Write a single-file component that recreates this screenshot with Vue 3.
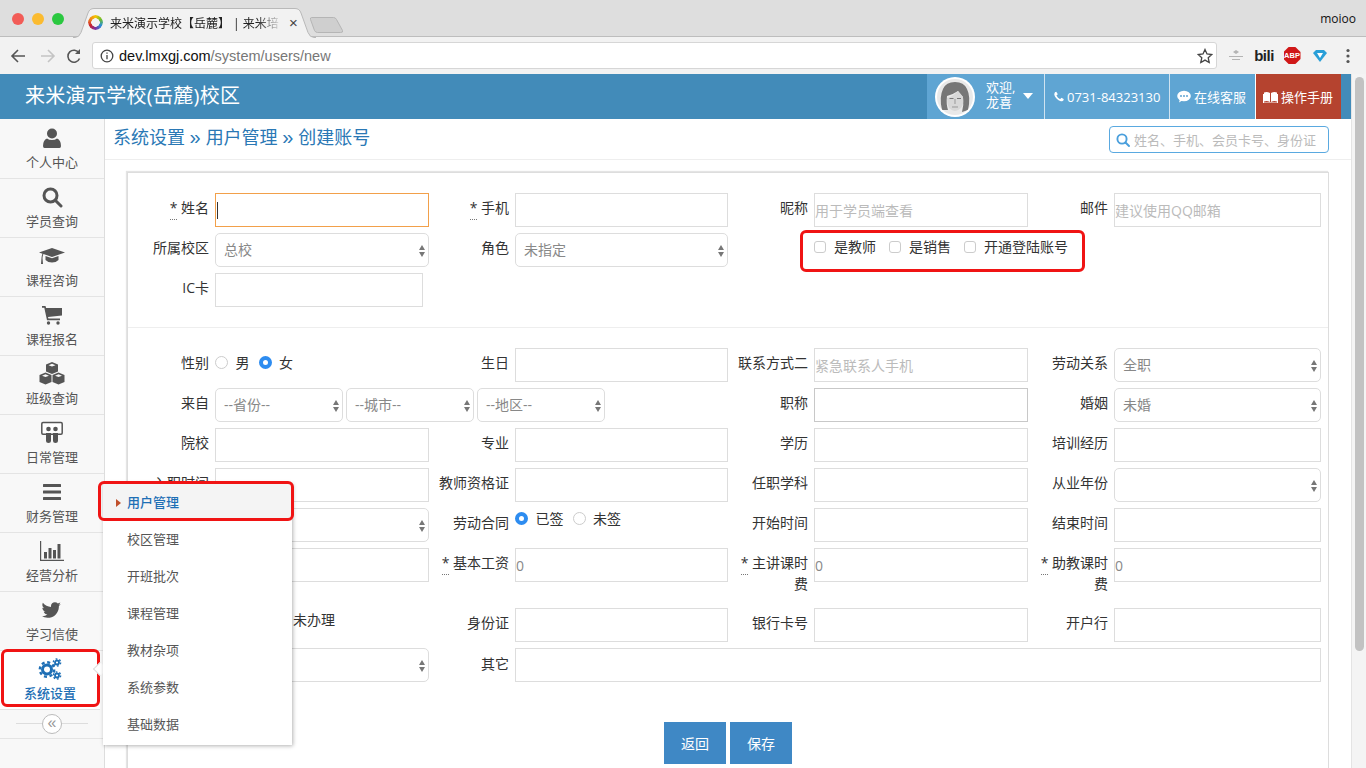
<script setup>
const twitter = 'M1620 408q-67 98-162 167 1 14 1 42 0 130-38 259.5t-115.5 248.5-184.5 210.5-258 146-323 54.5q-271 0-496-145 35 4 78 4 225 0 401-138-105-2-188-64.5t-114-159.5q33 5 61 5 43 0 85-11-112-23-185.5-111.5t-73.5-205.5v-4q68 38 146 41-66-44-105-115t-39-154q0-88 44-163 121 149 294.5 238.5t371.5 99.5q-8-38-8-74 0-134 94.5-228.5t228.5-94.5q140 0 236 102 109-21 205-78-37 115-142 178 97-10 189-50z'
const phone = 'M1600 1240q0 27-10 70.5t-21 68.5q-21 50-122 106-94 51-186 51-27 0-53-3.5t-57.5-12.5-47-14.5-55.5-20.5-49-18q-98-35-175-83-127-79-264-216t-216-264q-48-77-83-175-3-9-18-49t-20.5-55.5-14.5-47-12.5-57.5-3.5-53q0-92 51-186 56-101 106-122 25-11 68.5-21t70.5-10q14 0 21 3 18 6 53 76 11 19 30 54t35 63.5 31 53.5q3 4 17.5 25t21.5 35.5 7 28.5q0 20-28.5 50t-62 55-62 53-28.5 46q0 9 5 22.5t8.5 20.5 14 24 11.5 19q76 137 174 235t235 174q2 1 19 11.5t24 14 20.5 8.5 22.5 5q18 0 46-28.5t53-62 55-62 50-28.5q14 0 28.5 7t35.5 21.5 25 17.5q25 15 53.5 31t63.5 35 54 30q70 35 76 53 3 7 3 21z'
const navItems = [
  { key: 'user', label: '个人中心' },
  { key: 'search', label: '学员查询' },
  { key: 'cap', label: '课程咨询' },
  { key: 'cart', label: '课程报名' },
  { key: 'cubes', label: '班级查询' },
  { key: 'slide', label: '日常管理' },
  { key: 'bars', label: '财务管理' },
  { key: 'chart', label: '经营分析' },
  { key: 'twitter', label: '学习信使' },
  { key: 'cogs', label: '系统设置', active: true }
]
const menu = ['用户管理', '校区管理', '开班批次', '课程管理', '教材杂项', '系统参数', '基础数据']
</script>

<template>
  <div class="page">
    <div class="tabbar">
      <div class="lights"><i class="l-red"></i><i class="l-yellow"></i><i class="l-green"></i></div>
      <div class="tab">
        <svg class="tab-bg" width="243" height="30" viewBox="0 0 243 30"><path d="M0 29.500h2q4 0 6-5L15 5q1.500-4.500 6-4.500h201q4.500 0 6 4.500l7 19.500q2 5 6 5h2" fill="#f2f2f2" stroke="#b9b9b9"/></svg>
        <span class="favicon"></span>
        <span class="tab-title">来米演示学校【岳麓】 | 来米培</span>
        <span class="tab-x">×</span>
      </div>
      <svg class="newtab" width="34" height="18" viewBox="0 0 34 18"><path d="M1.500 1.500h22q2 0 3 2l6 11q1 2-2 2h-23q-2 0-3-2l-4-11q-.5-2 1-2z" fill="#cfcfcf" stroke="#b5b5b5"/></svg>
      <span class="profile">moioo</span>
    </div>
    <div class="toolbar">
      <svg class="tool" width="18" height="18" viewBox="0 0 18 18" fill="none" stroke="#555" stroke-width="1.600"><path d="M16 9H3M9 3L3 9l6 6"/></svg>
      <svg class="tool dim" width="18" height="18" viewBox="0 0 18 18" fill="none" stroke="#c4c4c4" stroke-width="1.600"><path d="M2 9h13M9 3l6 6-6 6"/></svg>
      <svg class="tool last" width="18" height="18" viewBox="0 0 18 18" fill="none" stroke="#555" stroke-width="1.600"><path d="M14.500 11.500a6 6 0 1 1-.5-5.500"/><path d="M15 2v5h-5" fill="#555" stroke="none"/></svg>
      <div class="omni">
        <svg width="14" height="14" viewBox="0 0 14 14" fill="none" stroke="#444" stroke-width="1.300"><circle cx="7" cy="7" r="5.800"/><path d="M7 6v4.200M7 3.500v1.300"/></svg>
        <span class="url"><b>dev.lmxgj.com</b>/system/users/new</span>
        <svg class="star" width="16" height="16" viewBox="0 0 16 16" fill="none" stroke="#444" stroke-width="1.300"><path d="M8 1.500l2 4.500 4.800.5-3.600 3.200 1 4.800L8 12.100l-4.200 2.400 1-4.800L1.200 6.500 6 6z"/></svg>
      </div>
      <div class="exts">
        <svg width="18" height="16" viewBox="0 0 18 16"><path d="M9 2l3 2-3 2-3-2zM2 8h14v1H2zM5 11h8v1H5z" fill="#b4b4b4"/></svg>
        <span class="bili">bili</span>
        <span class="abp">ABP</span>
        <svg width="16" height="16" viewBox="0 0 16 16"><path d="M1 5l3-3h8l3 3-7 9z" fill="#2a9fd8"/><path d="M5 5h6l-3 5z" fill="#fff"/></svg>
        <svg width="4" height="16" viewBox="0 0 4 16" fill="#555"><circle cx="2" cy="2.500" r="1.600"/><circle cx="2" cy="8" r="1.600"/><circle cx="2" cy="13.500" r="1.600"/></svg>
      </div>
    </div>

    <div class="viewport">
      <div class="app">
        <header class="app-header">
          <div class="brand">来米演示学校(岳麓)校区</div>
          <div class="head-user">
            <svg class="avatar" width="40" height="40" viewBox="0 0 40 40">
              <circle cx="20" cy="20" r="20" fill="#fff"/>
              <clipPath id="face-clip"><circle cx="20" cy="20" r="18"/></clipPath>
              <g clip-path="url(#face-clip)">
                <rect width="40" height="40" fill="#e9e9e9"/>
                <path d="M7 33Q4 20 8 12 11 5 20 5t12 7q4 8 1 21l-6 2q2-7 1-15-3-3-5-6-6 4-11 5-1 8 1 14z" fill="#777"/>
                <path d="M12 21q5-1 11-7 3 3 5 6 1 8-2 11-3 3-6 3t-6-3q-2-4-2-10z" fill="#d8d8d8"/>
                <path d="M14.500 21.500h4M22 21.500h4" stroke="#777" stroke-width="1.200"/>
                <path d="M20 22v5M17 30h6" stroke="#999" fill="none"/>
              </g>
            </svg>
            <div class="welcome">欢迎,<br>龙喜</div>
            <i class="caret"></i>
          </div>
          <div class="head-cell phone">
            <svg width="12" height="12" viewBox="0 0 1792 1792" fill="#fff"><path :d="phone"/></svg>
            <span>0731-84323130</span>
          </div>
          <div class="head-cell chat">
            <svg width="14" height="13" viewBox="0 0 14 13"><ellipse cx="7" cy="6" rx="6.800" ry="5.200" fill="#fff"/><path d="M3 9l-1 3.500L6 10z" fill="#fff"/><g fill="#5fa5d3"><circle cx="4" cy="6" r="1"/><circle cx="7" cy="6" r="1"/><circle cx="10" cy="6" r="1"/></g></svg>
            <span>在线客服</span>
          </div>
          <div class="head-cell manual">
            <svg width="15" height="12" viewBox="0 0 15 12" fill="#fff"><path d="M1 1.500q3-1 6 .5v9q-3-1.500-6-.5zM8 2q3-1.500 6-.5v9q-3-1-6 .5z"/><path d="M0 3h1v8.500h13V3h1v9.500H0z"/></svg>
            <span>操作手册</span>
          </div>
        </header>

        <div class="body">
          <aside class="sidebar">
            <nav>
              <a v-for="item in navItems" :key="item.key" class="nav-item" :class="{ active: item.active }">
                <span class="nav-icon">
                  <svg v-if="item.key === 'user'" width="22" height="22" viewBox="0 0 22 22" fill="#555"><circle cx="11" cy="6.500" r="5"/><path d="M3.500 21q-1.500 0-1.500-2 0-6 4-7.500 2 1.500 5 1.500t5-1.500q4 1.500 4 7.500 0 2-1.500 2z"/></svg>
                  <svg v-else-if="item.key === 'search'" width="22" height="22" viewBox="0 0 22 22" fill="none" stroke="#555" stroke-width="3"><circle cx="9.500" cy="9.500" r="6.500"/><path d="M14.500 14.500l5.500 5.500" stroke-linecap="round"/></svg>
                  <svg v-else-if="item.key === 'cap'" width="26" height="22" viewBox="0 0 26 22" fill="#555"><path d="M13 3L26 7.500 13 12 4.500 9.100Q3.700 10.500 3.500 13l.5 6H2l.5-6q.2-3 1-4.300L0 7.500z"/><path d="M6.500 11L13 13.200 19.500 11v4q-2.500 2.500-6.500 2.500T6.500 15z"/></svg>
                  <svg v-else-if="item.key === 'cart'" width="20" height="20" viewBox="0 0 20 20" fill="#555"><path d="M0 1h3.500l.6 2H20v7.500L6 12l.4 1.500H18v1.700H5L2.300 2.700H0z"/><circle cx="6.500" cy="18" r="1.700"/><circle cx="16" cy="18" r="1.700"/></svg>
                  <svg v-else-if="item.key === 'cubes'" width="26" height="24" viewBox="0 0 26 24" fill="#555" fill-rule="evenodd"><path d="M13 0l6 2.500v7L13 12l-6-2.500v-7zM13 1.800L9.500 3.200 13 4.600l3.500-1.400zM6.500 10.500l6 2.500v7l-6 2.500-6-2.500v-7zM6.500 12.300L3 13.700l3.500 1.400L10 13.700zM19.500 10.500l6 2.500v7l-6 2.500-6-2.500v-7zM19.500 12.300L16 13.700l3.500 1.400 3.500-1.400z"/></svg>
                  <svg v-else-if="item.key === 'slide'" width="22" height="24" viewBox="0 0 22 24"><path d="M2 1.500h18q1.200 0 1.200 1.200V12q0 1.200-1.200 1.200H2Q.8 13.200.8 12V2.700Q.8 1.500 2 1.500z" fill="#fff" stroke="#555" stroke-width="1.500"/><circle cx="7.500" cy="8" r="2.300" fill="#555"/><circle cx="14.500" cy="8" r="2.300" fill="#555"/><path d="M5 12h5v8q0 2-2.500 2T5 20zM12 12h5v8q0 2-2.500 2T12 20z" fill="#555"/></svg>
                  <svg v-else-if="item.key === 'bars'" width="18" height="16" viewBox="0 0 18 16" fill="#555"><rect width="18" height="3" rx=".5"/><rect y="6.500" width="18" height="3" rx=".5"/><rect y="13" width="18" height="3" rx=".5"/></svg>
                  <svg v-else-if="item.key === 'chart'" width="24" height="20" viewBox="0 0 24 20" fill="#555"><path d="M0 0h1.200v18.800H24V20H0z"/><rect x="4" y="11" width="3" height="6.500"/><rect x="8.500" y="7" width="3" height="10.500"/><rect x="13" y="9" width="3" height="8.500"/><rect x="17.500" y="3" width="3" height="14.500"/></svg>
                  <svg v-else-if="item.key === 'twitter'" width="22" height="22" viewBox="0 0 1792 1792" fill="#555"><path :d="twitter"/></svg>
                  <svg v-else width="24" height="24" viewBox="0 0 24 24" fill="none" stroke="#1e6fb5">
                    <circle cx="9" cy="12.500" r="4.500" stroke-width="3"/><circle cx="9" cy="12.500" r="7.200" stroke-width="2.400" stroke-dasharray="3 2.650"/>
                    <circle cx="19" cy="5.500" r="2" stroke-width="1.800"/><circle cx="19" cy="5.500" r="3.600" stroke-width="1.500" stroke-dasharray="1.800 1.970"/>
                    <circle cx="19" cy="18.500" r="2" stroke-width="1.800"/><circle cx="19" cy="18.500" r="3.600" stroke-width="1.500" stroke-dasharray="1.800 1.970"/>
                  </svg>
                </span>
                <span class="nav-label">{{ item.label }}</span>
                <i v-if="item.active" class="nav-mark"></i>
                <i v-if="item.active" class="nav-arrow"></i>
              </a>
            </nav>
            <div class="collapse"><span class="collapse-btn">«</span></div>
            <div class="flyout">
              <a v-for="(m, i) in menu" :key="m" class="fly-item" :class="{ current: i === 0 }">
                {{ m }}
                <i v-if="i === 0" class="fly-mark"></i>
              </a>
            </div>
          </aside>

          <main class="main">
            <div class="crumbbar">
              <div class="crumbs">系统设置<span class="sep">»</span>用户管理<span class="sep">»</span>创建账号</div>
              <div class="search">
                <svg width="14" height="14" viewBox="0 0 14 14" fill="none" stroke="#4a9fdc" stroke-width="1.900"><circle cx="6" cy="6" r="4.600"/><path d="M9.500 9.500l3.500 3.500" stroke-linecap="round"/></svg>
                <span>姓名、手机、会员卡号、身份证</span>
              </div>
            </div>
            <section class="card">
              <div class="form">
                <label><span class="req">*</span> 姓名</label>
                <div class="input focus"><i class="cursor"></i></div>
                <label><span class="req">*</span> 手机</label>
                <div class="input"></div>
                <label>昵称</label>
                <div class="input ph">用于学员端查看</div>
                <label>邮件</label>
                <div class="input ph">建议使用QQ邮箱</div>

                <label>所属校区</label>
                <div class="select">总校</div>
                <label>角色</label>
                <div class="select">未指定</div>
                <label></label>
                <div class="checks">
                  <span class="check-item"><i class="box"></i>是教师</span>
                  <span class="check-item"><i class="box"></i>是销售</span>
                  <span class="check-item"><i class="box"></i>开通登陆账号</span>
                  <i class="mark-checks"></i>
                </div>
                <label></label>
                <div></div>

                <label>IC卡</label>
                <div class="input short"></div>
              </div>

              <hr class="rule">

              <div class="form">
                <label>性别</label>
                <div class="radios">
                  <i class="radio"></i><span>男</span>
                  <i class="radio on"></i><span>女</span>
                </div>
                <label>生日</label>
                <div class="input"></div>
                <label>联系方式二</label>
                <div class="input ph">紧急联系人手机</div>
                <label>劳动关系</label>
                <div class="select">全职</div>

                <label>来自</label>
                <div class="triple">
                  <div class="select">--省份--</div>
                  <div class="select">--城市--</div>
                  <div class="select">--地区--</div>
                </div>
                <label>职称</label>
                <div class="input dark"></div>
                <label>婚姻</label>
                <div class="select">未婚</div>

                <label>院校</label>
                <div class="input"></div>
                <label>专业</label>
                <div class="input"></div>
                <label>学历</label>
                <div class="input"></div>
                <label>培训经历</label>
                <div class="input"></div>

                <label>入职时间</label>
                <div class="input"></div>
                <label>教师资格证</label>
                <div class="input"></div>
                <label>任职学科</label>
                <div class="input"></div>
                <label>从业年份</label>
                <div class="select"></div>

                <label></label>
                <div class="select"></div>
                <label>劳动合同</label>
                <div class="radios contract">
                  <i class="radio on"></i><span>已签</span>
                  <i class="radio"></i><span>未签</span>
                </div>
                <label>开始时间</label>
                <div class="input"></div>
                <label>结束时间</label>
                <div class="input"></div>

                <label></label>
                <div class="input"></div>
                <label class="wrap"><span class="req">*</span> 基本工资</label>
                <div class="input val">0</div>
                <label class="wrap"><span class="req">*</span> 主讲课时费</label>
                <div class="input val">0</div>
                <label class="wrap"><span class="req">*</span> 助教课时费</label>
                <div class="input val">0</div>

                <label></label>
                <div class="plain">未办理</div>
                <label>身份证</label>
                <div class="input"></div>
                <label>银行卡号</label>
                <div class="input"></div>
                <label>开户行</label>
                <div class="input"></div>

                <label></label>
                <div class="select"></div>
                <label class="low">其它</label>
                <div class="input span-all"></div>
              </div>

              <div class="actions">
                <button type="button">返回</button>
                <button type="button">保存</button>
              </div>
            </section>
          </main>
        </div>
      </div>
      <div class="scrollbar"><i></i></div>
    </div>
  </div>
</template>

<style>
html, body { margin: 0; overflow: hidden; }
</style>

<style scoped>
.page {
  width: 1366px; height: 768px; overflow: hidden; display: flex; flex-direction: column;
  font-family: "Open Sans", "Noto Sans CJK SC", sans-serif; font-size: 14px; color: #333; background: #fff;
}
i { display: block; font-style: normal; }

.tabbar { height: 37px; flex: none; background: #dedede; display: flex; position: relative; box-sizing: border-box; border-bottom: 1px solid #bdbdbd; }
.lights { display: flex; gap: 8px; padding: 13px 0 0 12px; width: 61px; box-sizing: border-box; }
.lights i { width: 12px; height: 12px; border-radius: 50%; flex: none; }
.l-red { background: #f25c57; }
.l-yellow { background: #fbbb30; }
.l-green { background: #2bc840; }
.tab { width: 243px; height: 29px; margin: 8px 0 0 12px; position: relative; display: flex; align-items: center; padding-left: 15px; box-sizing: border-box; }
.tab-bg { position: absolute; left: 0; top: 0; }
.favicon {
  position: relative; width: 15px; height: 15px; border-radius: 50%; flex: none;
  background: conic-gradient(#f5c400, #6fbe2e, #2a8fd8, #7a2fa0, #c8202f, #f08020, #f5c400);
  -webkit-mask: radial-gradient(circle, transparent 4px, #000 4.500px); mask: radial-gradient(circle, transparent 4px, #000 4.500px);
}
.tab-title {
  position: relative; margin-left: 7px; width: 173px; overflow: hidden; white-space: nowrap; font-size: 12px; color: #222;
  -webkit-mask-image: linear-gradient(90deg, #000 85%, transparent); mask-image: linear-gradient(90deg, #000 85%, transparent);
}
.tab-x { position: relative; margin-left: 6px; font-size: 15px; color: #444; font-family: "Liberation Sans", sans-serif; }
.newtab { margin: 16px 0 0 -6px; }
.profile { margin-left: auto; padding: 11px 10px 0 0; font-size: 12px; color: #111; line-height: 16px; }

.toolbar { height: 37px; flex: none; background: #f2f2f2; display: flex; align-items: center; box-sizing: border-box; padding: 0 0 0 9px; }
.tool { flex: none; margin-right: 12px; }
.tool.dim { margin-right: 8px; }
.tool.last { margin-right: 9px; }
.omni { width: 1125px; height: 27px; box-sizing: border-box; flex: none; background: #fff; border: 1px solid #d6d6d6; border-radius: 3px; display: flex; align-items: center; padding: 0 3px 0 7px; }
.url { margin-left: 5px; font-size: 14.500px; color: #777; font-family: "Liberation Sans", sans-serif; }
.url b { font-weight: 400; color: #111; }
.star { margin-left: auto; }
.exts { display: grid; grid-template-columns: repeat(5, 28px); justify-items: center; align-items: center; padding-left: 5px; }
.bili { font: 700 15px "Liberation Sans", sans-serif; color: #222; letter-spacing: -.5px; }
.abp { width: 17px; height: 17px; background: #d01818; color: #fff; font: 700 7.500px/17px "Liberation Sans", sans-serif; text-align: center; clip-path: polygon(30% 0, 70% 0, 100% 30%, 100% 70%, 70% 100%, 30% 100%, 0 70%, 0 30%); }

.viewport { flex: 1; display: flex; min-height: 0; }
.app { flex: 1; min-width: 0; display: flex; flex-direction: column; }
.scrollbar { width: 15px; flex: none; background: #f4f4f4; border-left: 1px solid #e4e4e4; box-sizing: border-box; padding: 3px 2px 0 3px; }
.scrollbar i { height: 574px; background: #c2c2c2; border-radius: 5px; }

.app-header { height: 45px; flex: none; background: #428bb9; display: flex; align-items: stretch; color: #fff; padding-right: 10px; }
.brand { flex: 1; padding-left: 25px; font-size: 20px; line-height: 44px; letter-spacing: .3px; }
.head-user { width: 117px; background: #5fa5d3; display: flex; align-items: center; padding-left: 8px; box-sizing: border-box; }
.avatar { flex: none; }
.welcome { margin: -3px 0 0 11px; font-size: 13px; line-height: 15px; }
.caret { width: 0; height: 0; margin: -1px 0 0 8px; border: 5px solid transparent; border-top: 6px solid #fff; border-bottom: 0; }
.head-cell { display: flex; align-items: center; box-sizing: border-box; background: #5fa5d3; border-left: 1px solid #cfe3f1; white-space: nowrap; font-size: 13px; }
.phone { width: 125px; padding-left: 8px; gap: 2px; }
.chat { width: 86px; padding-left: 7px; gap: 3px; }
.manual { width: 86px; background: #b5432f; border-left-color: #fff; padding-left: 7px; gap: 3px; }

.body { flex: 1; min-height: 0; display: flex; }
.sidebar { width: 105px; flex: none; position: relative; background: #f8f8f8; border-right: 1px solid #ddd; box-sizing: border-box; }
nav { padding-top: 1px; }
.nav-item { display: flex; flex-direction: column; align-items: center; height: 59px; box-sizing: border-box; border-bottom: 1px solid #e4e4e4; padding-top: 6px; color: #555; position: relative; }
.nav-icon { height: 24px; display: flex; align-items: center; justify-content: center; }
.nav-label { font-size: 13px; line-height: 18px; margin-top: 3px; }
.nav-item.active { background: #fff; color: #1e6fb5; font-weight: 500; width: 100px; }
.nav-mark { position: absolute; left: 1px; top: -2px; width: 99px; height: 58px; border: 3px solid #f01414; border-radius: 6px; box-sizing: border-box; }
.nav-arrow { position: absolute; left: 95px; top: 13px; width: 9px; height: 9px; background: #fff; border-left: 1px solid #ddd; border-bottom: 1px solid #ddd; transform: rotate(45deg); }
.collapse { height: 28px; display: flex; align-items: center; justify-content: center; border-bottom: 1px solid #e4e4e4; position: relative; }
.collapse::before { content: ""; position: absolute; left: 16px; right: 16px; top: 13px; height: 1px; background: #ddd; }
.collapse-btn { position: relative; width: 20px; height: 20px; border-radius: 50%; background: #fff; border: 1px solid #bbb; box-sizing: border-box; color: #999; text-align: center; font: 16px/16px "Liberation Sans", sans-serif; }
.flyout { position: absolute; left: 103px; top: 364px; width: 189px; height: 262px; background: #fff; box-shadow: 1px 1px 4px rgba(0,0,0,.3); z-index: 5; padding-top: 1px; box-sizing: border-box; }
.fly-item { display: block; height: 37px; line-height: 36px; padding-left: 24px; font-size: 13px; color: #555; position: relative; }
.fly-item.current { background: #f4f4f4; color: #1e6fb5; font-weight: 500; }
.fly-item.current::before { content: ""; position: absolute; left: 13px; top: 15px; border: 4px solid transparent; border-left: 5px solid #c0502c; border-right: 0; }
.fly-mark { position: absolute; left: -5px; top: -3px; width: 196px; height: 40px; border: 3px solid #f01414; border-radius: 6px; box-sizing: border-box; }

.main { flex: 1; min-width: 0; }
.crumbbar { height: 41px; box-sizing: border-box; display: flex; align-items: center; justify-content: space-between; padding: 0 22px 5px 8px; border-bottom: 1px solid #eee; }
.crumbs { font-size: 18px; color: #2a78b5; line-height: 26px; }
.sep { font: 20px/26px "Liberation Sans", sans-serif; margin: 0 5px 0 4.500px; }
.search { width: 220px; height: 27px; box-sizing: border-box; margin-top: 6px; border: 1px solid #5aa9e0; border-radius: 4px; display: flex; align-items: center; gap: 4px; padding-left: 6px; color: #bbb; font-size: 13px; }
.card { margin: 12px 22px 0; border: 1px solid #ddd; box-shadow: -1px -1px 1px #e4e4e4; box-sizing: border-box; height: 620px; padding-top: 20px; }
.form { display: grid; grid-template-columns: 87px 214px 86px 213px 86px 214px 86px 207px; row-gap: 6px; align-items: start; }
.form label { text-align: right; padding: 4px 6px 8px 0; line-height: 21px; font-size: 14px; color: #333; box-sizing: border-box; }
.form label.wrap { padding-left: 11px; }
.form label.low { padding-top: 5px; }
.req { border-bottom: 1px dotted #777; padding-bottom: 2px; font-size: 14px; }
.input { height: 34px; box-sizing: border-box; border: 1px solid #ddd; background: #fff; padding: 2px 0 0; line-height: 30px; font-size: 14px; }
.input.focus { border-color: #f2a04a; position: relative; }
.input.dark { border-color: #c8c8c8; }
.cursor { position: absolute; left: 1px; top: 8px; width: 1px; height: 17px; background: #333; }
.input.short { width: 208px; }
.input.ph { color: #bbb; white-space: nowrap; overflow: hidden; }
.input.val { color: #888; }
.span-all { grid-column: 4 / 9; }
.select { height: 34px; box-sizing: border-box; border: 1px solid #ddd; border-radius: 5px; background: #fff; padding: 1px 8px 0; line-height: 29px; color: #888; font-size: 14px; position: relative; }
.select::before, .select::after { content: ""; position: absolute; right: 3px; border-left: 3.500px solid transparent; border-right: 3.500px solid transparent; }
.select::before { top: 11px; border-bottom: 5px solid #777; }
.select::after { top: 18px; border-top: 5px solid #777; }
.triple { grid-column: 2 / 5; display: flex; gap: 3px; }
.triple .select { width: 128px; flex: none; }
.checks { display: flex; gap: 13px; position: relative; height: 34px; padding-top: 3px; box-sizing: border-box; line-height: 22px; }
.check-item { display: flex; align-items: center; height: 22px; white-space: nowrap; }
.box { width: 12px; height: 12px; border: 1px solid #ccc; border-radius: 3px; margin-right: 8px; flex: none; box-sizing: border-box; margin-top: -1px; }
.mark-checks { position: absolute; left: -14px; top: -3px; width: 285px; height: 42px; border: 3px solid #f01414; border-radius: 6px; box-sizing: border-box; z-index: 2; }
.radios { display: flex; align-items: center; height: 28px; white-space: nowrap; }
.radios span { margin: 0 9px 0 7.500px; }
.radio { width: 13px; height: 13px; border: 1px solid #ccc; border-radius: 50%; box-sizing: border-box; flex: none; background: #fff; }
.radio.on { border: 4px solid #2d8cf0; }
.contract { height: 20px; }
.plain { padding: 1px 0 0 78px; line-height: 21px; }
.rule { border: 0; border-top: 1px solid #eee; margin: 20px 0; }
.actions { display: flex; justify-content: center; gap: 4px; margin-top: 40px; }
.actions button { width: 62px; height: 42px; border: 0; background: #3f88c5; color: #fff; font: inherit; padding: 0; }
</style>
